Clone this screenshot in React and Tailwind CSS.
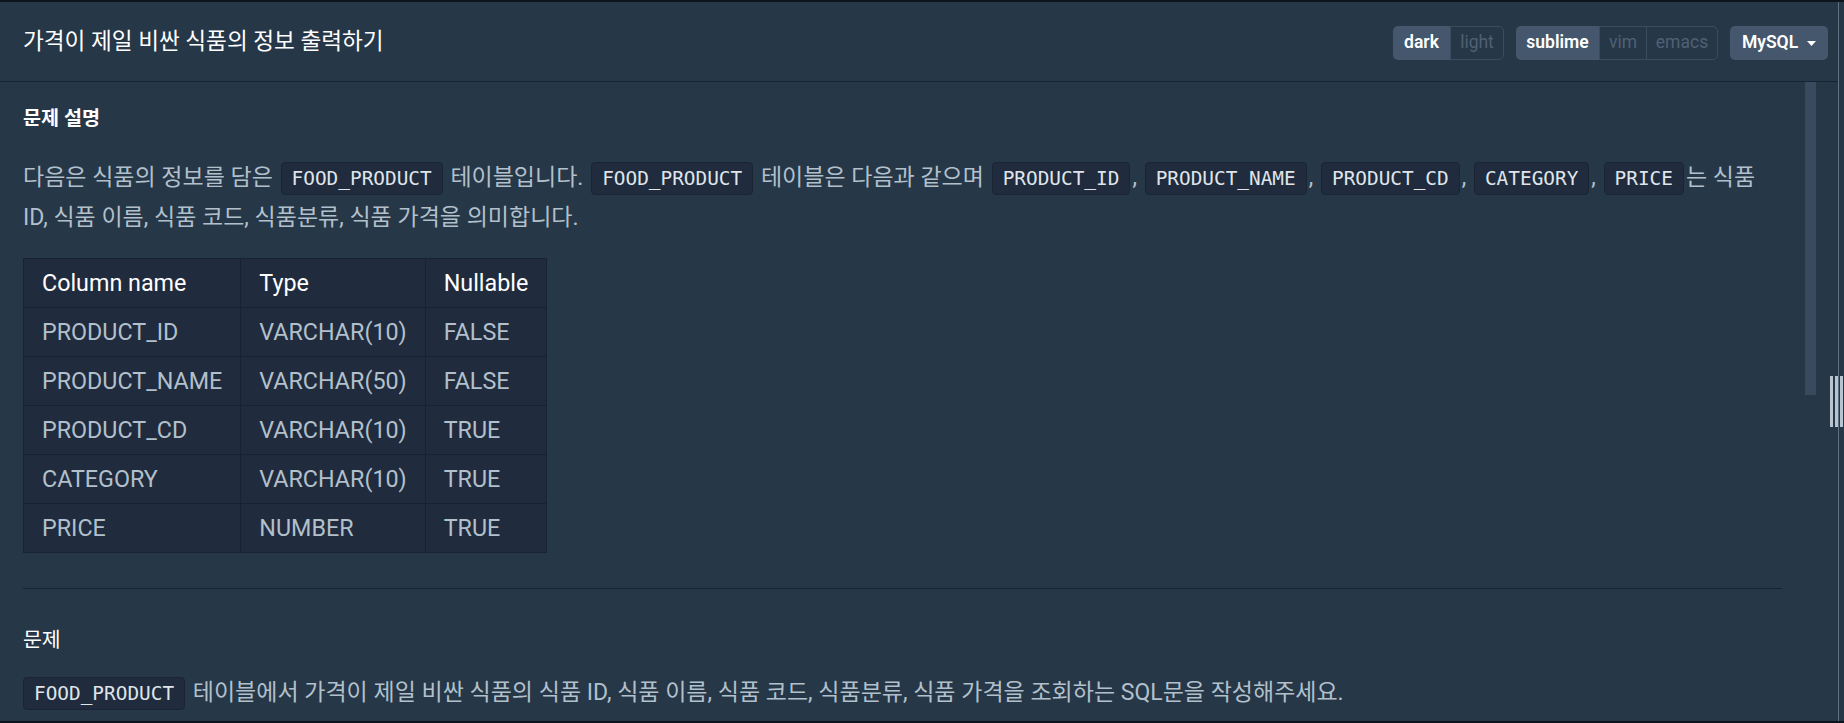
import React from "react";

const Code = ({ children, first }) => (
  <code
    className={
      first
        ? "inline-block mr-[2px] px-[10px] py-[2px] leading-[27px] rounded-[4px] bg-[#202b3d] border border-[#1a2433] text-[#dfe5ea] text-[19.4px] font-[family-name:'DejaVu_Sans_Mono',monospace]"
        : "inline-block mx-[2px] px-[10px] py-[2px] leading-[27px] rounded-[4px] bg-[#202b3d] border border-[#1a2433] text-[#dfe5ea] text-[19.4px] font-[family-name:'DejaVu_Sans_Mono',monospace]"
    }
  >
    {children}
  </code>
);

const rows = [
  ["PRODUCT_ID", "VARCHAR(10)", "FALSE"],
  ["PRODUCT_NAME", "VARCHAR(50)", "FALSE"],
  ["PRODUCT_CD", "VARCHAR(10)", "TRUE"],
  ["CATEGORY", "VARCHAR(10)", "TRUE"],
  ["PRICE", "NUMBER", "TRUE"],
];

export default function App() {
  return (
    <div className="w-[1844px] h-[723px] overflow-hidden bg-[#263747] border-t-2 border-b-2 border-[#0c151c] flex font-[family-name:Roboto,'Noto_Sans_CJK_KR',sans-serif] relative">
      {/* left pane */}
      <div className="w-[1838px] flex flex-col relative">
        {/* header */}
        <div className="h-[80px] shrink-0 border-b border-[#172334] flex items-center justify-between pl-[23px] pr-[10px]">
          <h1 className="text-[22.6px] text-white leading-[32px] font-normal">가격이 제일 비싼 식품의 정보 출력하기</h1>
          <div className="flex items-center gap-[12px] text-[17.5px] mt-[2px]">
            <div className="flex h-[34px]">
              <button className="w-[57px] h-full bg-[#44576c] text-white font-semibold rounded-l-[5px]">dark</button>
              <button className="w-[54px] h-full text-[#4f6174] border border-[#3b4c60] rounded-r-[5px]">light</button>
            </div>
            <div className="flex h-[34px]">
              <button className="w-[83px] h-full bg-[#44576c] text-white font-semibold rounded-l-[5px]">sublime</button>
              <button className="w-[48px] h-full text-[#4f6174] border border-[#3b4c60]">vim</button>
              <button className="w-[72px] h-full -ml-px text-[#4f6174] border border-[#3b4c60] rounded-r-[5px]">emacs</button>
            </div>
            <button className="w-[98px] h-[34px] bg-[#44576c] text-white font-semibold rounded-[5px] flex items-center justify-center gap-[9px]">
              <span>MySQL</span>
              <svg width="9" height="5" viewBox="0 0 9 5" className="mt-[1px]">
                <path d="M0 0 L9 0 L4.5 5 Z" fill="#ffffff" />
              </svg>
            </button>
          </div>
        </div>

        {/* content */}
        <div className="flex-1 relative overflow-hidden">
          <div className="pl-[23px] pr-[56px] pt-[22.5px]">
            <h5 className="text-[19.6px] font-bold leading-[27px] text-white">문제 설명</h5>
            <p className="mt-[26px] pr-[6px] text-[23px] leading-[40.5px] text-[#b2c0cc]">
              다음은 식품의 정보를 담은 <Code>FOOD_PRODUCT</Code> 테이블입니다. <Code>FOOD_PRODUCT</Code> 테이블은 다음과 같으며 <Code>PRODUCT_ID</Code>, <Code>PRODUCT_NAME</Code>, <Code>PRODUCT_CD</Code>, <Code>CATEGORY</Code>, <Code>PRICE</Code>
              <span>는 식품 </span>
              <span>ID, 식품 이름, 식품 코드, 식품분류, 식품 가격을 의미합니다.</span>
            </p>
            <table className="mt-[19px] border-collapse bg-[#202b3d] text-[23.3px] font-[family-name:Roboto,sans-serif]">
              <thead>
                <tr>
                  {["Column name", "Type", "Nullable"].map((h) => (
                    <th key={h} className="border border-[#172334] px-[18px] py-[7px] leading-[34px] text-left font-normal text-white">
                      {h}
                    </th>
                  ))}
                </tr>
              </thead>
              <tbody>
                {rows.map((r) => (
                  <tr key={r[0]}>
                    {r.map((c, i) => (
                      <td key={i} className="border border-[#172334] px-[18px] py-[7px] leading-[34px] text-[#b2c0cc]">
                        {c}
                      </td>
                    ))}
                  </tr>
                ))}
              </tbody>
            </table>
            <hr className="mt-[35.5px] border-0 border-t border-[#172334]" />
            <h5 className="mt-[37.5px] text-[20.5px] leading-[27px] text-white font-normal">문제</h5>
            <p className="mt-[19.5px] text-[23px] leading-[40.5px] text-[#b2c0cc]">
              <Code first>FOOD_PRODUCT</Code> 테이블에서 가격이 제일 비싼 식품의 식품 ID, 식품 이름, 식품 코드, 식품분류, 식품 가격을 조회하는 SQL문을 작성해주세요.
            </p>
          </div>
          {/* scrollbar thumb */}
          <div className="absolute left-[1805px] top-0 w-[11px] h-[313px] bg-[#3a4a5e]" />
        </div>
      </div>
      {/* divider */}
      <div className="w-px bg-[#5f7080]" />
      <div className="flex-1" />
      {/* gutter handle */}
      <div className="absolute left-[1830px] top-[374px] h-[51px] flex gap-[2px]">
        <div className="w-[3px] h-full bg-[#b8c4cf]" />
        <div className="w-[3px] h-full bg-[#b8c4cf]" />
        <div className="w-[3px] h-full bg-[#b8c4cf]" />
      </div>
    </div>
  );
}
